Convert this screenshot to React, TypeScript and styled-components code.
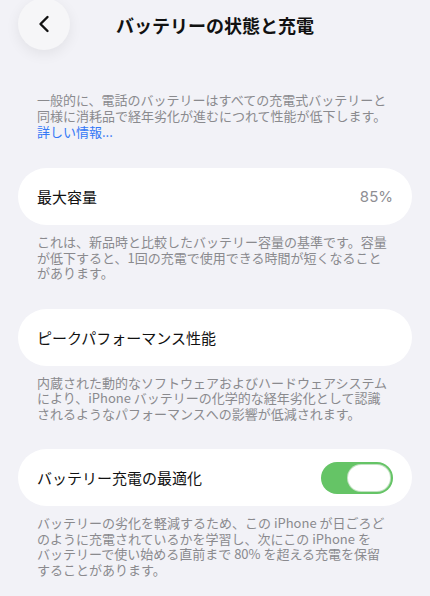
import styled, { createGlobalStyle } from "styled-components";

const GlobalStyle = createGlobalStyle`
  html, body {
    margin: 0;
    padding: 0;
    background: #f2f2f7;
  }
  body {
    font-family: "Noto Sans CJK JP", "Noto Sans", sans-serif;
    -webkit-font-smoothing: antialiased;
  }
`;

const Page = styled.div`
  width: 430px;
  min-height: 596px;
  background: #f2f2f7;
  padding: 0 18px;
  box-sizing: border-box;
  overflow: hidden;
`;

const Header = styled.header`
  display: grid;
  grid-template-columns: 52px 1fr 52px;
  align-items: center;
  height: 50px;
`;

const BackButton = styled.button`
  width: 52px;
  height: 52px;
  margin-top: -2px;
  border-radius: 50%;
  border: none;
  background: #f6f6f8;
  box-shadow: 0 4px 14px rgba(0, 0, 0, 0.07);
  display: flex;
  align-items: center;
  justify-content: center;
  padding: 0;
  color: #111;
`;

const Title = styled.h1`
  margin: 0;
  text-align: center;
  font-size: 18px;
  font-weight: 700;
  color: #111;
  letter-spacing: 0;
`;

const Intro = styled.p`
  margin: 42px 0 0;
  padding: 0 19px;
  font-size: 13px;
  line-height: 16px;
  color: #8a8a8e;
`;

const Link = styled.a`
  color: #3478f6;
  text-decoration: none;
`;

const Section = styled.section`
  margin-top: 28px;
`;

const Card = styled.div`
  height: 57px;
  border-radius: 28.5px;
  background: #ffffff;
  padding: 0 19px;
  display: flex;
  align-items: center;
  justify-content: space-between;
`;

const Label = styled.span`
  font-size: 15px;
  color: #111;
`;

const Value = styled.span`
  font-family: "Inter", "Noto Sans CJK JP", sans-serif;
  font-size: 15px;
  color: #8e8e93;
`;

const Footer = styled.p`
  margin: 9px 0 0;
  padding: 0 19px;
  font-size: 13px;
  line-height: 15.5px;
  color: #8a8a8e;
`;

const Toggle = styled.div<{ $on: boolean }>`
  position: relative;
  width: 72px;
  height: 32px;
  border-radius: 16px;
  background: ${(p) => (p.$on ? "#65c466" : "#e9e9eb")};
  flex-shrink: 0;
`;

const Knob = styled.span<{ $on: boolean }>`
  position: absolute;
  top: 2px;
  ${(p) => (p.$on ? "right: 2px;" : "left: 2px;")}
  width: 44px;
  height: 28px;
  border-radius: 14px;
  background: #ffffff;
  box-sizing: border-box;
  border: 1px solid rgba(80, 170, 80, 0.35);
`;

const ChevronLeft = () => (
  <svg width="14" height="18" viewBox="0 0 14 18" fill="none">
    <path
      d="M10.5 2 L3.5 9 L10.5 16"
      stroke="currentColor"
      strokeWidth="2.4"
      strokeLinecap="round"
      strokeLinejoin="round"
    />
  </svg>
);

export default function App() {
  return (
    <>
      <GlobalStyle />
      <Page>
        <Header>
          <BackButton aria-label="戻る">
            <ChevronLeft />
          </BackButton>
          <Title>バッテリーの状態と充電</Title>
          <span />
        </Header>

        <Intro>
          一般的に、電話のバッテリーはすべての充電式バッテリーと
          <br />
          同様に消耗品で経年劣化が進むにつれて性能が低下します。
          <br />
          <Link href="#">詳しい情報...</Link>
        </Intro>

        <Section>
          <Card>
            <Label>最大容量</Label>
            <Value>85%</Value>
          </Card>
          <Footer>
            これは、新品時と比較したバッテリー容量の基準です。容量
            <br />
            が低下すると、1回の充電で使用できる時間が短くなること
            <br />
            があります。
          </Footer>
        </Section>

        <Section>
          <Card>
            <Label>ピークパフォーマンス性能</Label>
          </Card>
          <Footer>
            内蔵された動的なソフトウェアおよびハードウェアシステム
            <br />
            により、iPhone バッテリーの化学的な経年劣化として認識
            <br />
            されるようなパフォーマンスへの影響が低減されます。
          </Footer>
        </Section>

        <Section>
          <Card>
            <Label>バッテリー充電の最適化</Label>
            <Toggle $on>
              <Knob $on />
            </Toggle>
          </Card>
          <Footer>
            バッテリーの劣化を軽減するため、この iPhone が日ごろど
            <br />
            のように充電されているかを学習し、次にこの iPhone を
            <br />
            バッテリーで使い始める直前まで 80% を超える充電を保留
            <br />
            することがあります。
          </Footer>
        </Section>
      </Page>
    </>
  );
}
